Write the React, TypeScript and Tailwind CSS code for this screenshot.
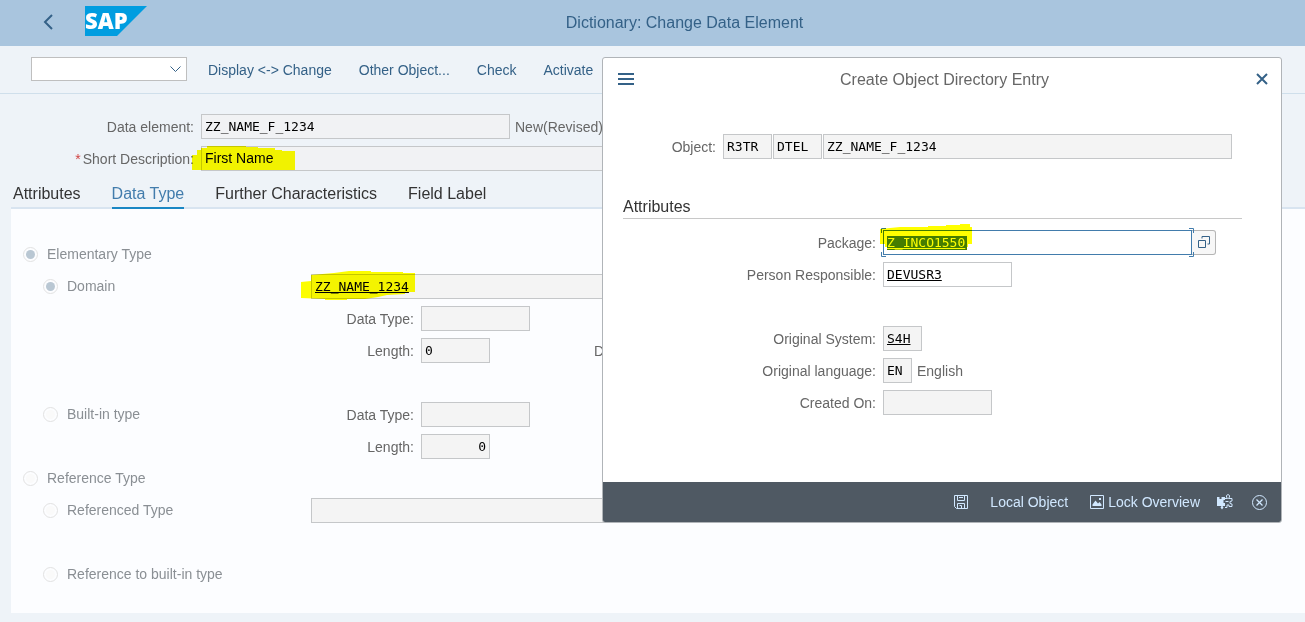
import React, { useId } from "react";

const mono = "font-['DejaVu_Sans_Mono',monospace] text-[13px]";
const sans = "font-['Liberation_Sans',Arial,sans-serif] text-sm";

type FieldProps = {
  label?: string;
  ariaLabel?: string;
  labelWidth?: string;
  required?: boolean;
  value?: string;
  className?: string;
  children?: React.ReactNode;
};

function Field({ label, ariaLabel, labelWidth = "", required, value = "", className = "", children }: FieldProps) {
  const id = useId();
  return (
    <div className="flex h-8 items-center">
      {label && (
        <label htmlFor={id} className={`${labelWidth} shrink-0 pt-[2px] pr-[7px] text-right whitespace-nowrap text-[#666]`}>
          {required && <span className="mr-[2px] text-[#d04343]">*</span>}
          {label}
        </label>
      )}
      <div className="relative flex">
        <input
          id={id}
          aria-label={ariaLabel}
          defaultValue={value}
          className={`h-[25px] border px-[3px] outline-none ${className}`}
        />
        {children}
      </div>
    </div>
  );
}

const plain = "border-[#c5c7c9] text-black";

function Note({ className = "pl-[5px]", children }: { className?: string; children: React.ReactNode }) {
  return <span className={`pt-[2px] leading-[23px] text-[#666] ${className}`}>{children}</span>;
}

function Radio({ label, name, checked = false, nested = false }: { label: string; name: string; checked?: boolean; nested?: boolean }) {
  return (
    <label className={`flex w-[300px] shrink-0 items-center gap-[9px] text-[#8a8f94] ${nested ? "pl-8" : "pl-3"}`}>
      <input
        type="radio"
        name={name}
        defaultChecked={checked}
        className="size-[15px] appearance-none rounded-full border border-[#e2e2e2] bg-[#fafafa] bg-clip-content p-[2px] checked:bg-[#b9c7d3]"
      />
      {label}
    </label>
  );
}

function Marker({ d, className }: { d: string; className: string }) {
  return (
    <svg aria-hidden="true" className={`pointer-events-none absolute mix-blend-multiply ${className}`} fill="#ffff00">
      <path d={d} />
    </svg>
  );
}

function SapLogo() {
  return (
    <svg className="overflow-visible" width="62" height="30" viewBox="0 0 62 30" role="img" aria-label="SAP">
      <path d="M0 0H62L32 30H0Z" fill="#009de0" />
      <text x="0" y="23" fontSize="22" fontWeight="800" fill="#fff" fontFamily="Open Sans, sans-serif">
        SAP
      </text>
    </svg>
  );
}

const tabs = ["Attributes", "Data Type", "Further Characteristics", "Field Label"];
const actions = ["Display <-> Change", "Other Object...", "Check", "Activate"];

function Dialog() {
  return (
    <section
      role="dialog"
      aria-label="Create Object Directory Entry"
      className="absolute top-[57px] right-[23px] w-[680px] overflow-hidden rounded-[3px] border border-[#b0b4b8] bg-white"
    >
      <header className="flex h-[42px] items-center justify-between pr-3 pl-[15px]">
        <button aria-label="Menu">
          <svg width="16" height="12" viewBox="0 0 16 12" fill="#346187">
            <path d="M0 0h16v2H0zM0 5h16v2H0zM0 10h16v2H0z" />
          </svg>
        </button>
        <h2 className="pt-[2px] text-base text-[#666]">Create Object Directory Entry</h2>
        <button aria-label="Close">
          <svg width="14" height="14" viewBox="0 0 14 14" stroke="#346187" strokeWidth="2">
            <path d="M2 2l10 10M12 2L2 12" />
          </svg>
        </button>
      </header>

      <div className="mt-[30px] flex gap-px">
        <Field label="Object:" labelWidth="w-[120px]" value="R3TR" className={`${mono} ${plain} w-[49px] bg-[#f4f4f4]`} />
        <Field ariaLabel="Object type" value="DTEL" className={`${mono} ${plain} w-[49px] bg-[#f4f4f4]`} />
        <Field ariaLabel="Object name" value="ZZ_NAME_F_1234" className={`${mono} ${plain} w-[409px] bg-[#f4f4f4]`} />
      </div>

      <h3 className="mt-8 mr-[39px] ml-5 h-[25px] border-b border-[#c8c8c8] text-base leading-[25px] text-[#333]">Attributes</h3>

      <div className="mt-[7px] mb-16">
        <Field
          label="Package:"
          labelWidth="w-[280px]"
          value="Z_INCO1550"
          className={`${mono} w-[309px] border-[#427cac] bg-[linear-gradient(#457d00,#457d00)] bg-[length:80px_14px] bg-[position:3px_5px] bg-no-repeat text-[#ffff00] underline`}
        >
          <svg className="pointer-events-none absolute -top-[2px] -left-[2px]" width="314" height="29" fill="none" stroke="#427cac">
            <path d="M5 .5H.5V5M308 .5h4.500V5M.5 24v4.500H5M312.500 24v4.500H308" />
          </svg>
          <button aria-label="Value help" className="flex h-[25px] w-6 items-center justify-center rounded-r-[3px] border border-l-0 border-[#b5b5b5] bg-[#f7f7f7]">
            <svg width="12" height="12" viewBox="0 0 12 12" fill="none" stroke="#346187">
              <path d="M.5 4.500h7v7h-7zM4 .5h7.500V8H9.500M4 .5V2.500" />
            </svg>
          </button>
          <Marker
            className="-top-[6px] -left-[3px] h-[26px] w-[93px]"
            d="M0 5L20 3H48V2H66V1H80V0H90V3H92V20H88V23H5V20H0Z"
          />
        </Field>
        <Field label="Person Responsible:" labelWidth="w-[280px]" value="DEVUSR3" className={`${mono} ${plain} w-[129px] bg-white underline`} />
        <div className="mt-8">
          <Field label="Original System:" labelWidth="w-[280px]" value="S4H" className={`${mono} ${plain} w-[39px] bg-[#f4f4f4] underline`} />
        </div>
        <Field label="Original language:" labelWidth="w-[280px]" value="EN" className={`${mono} ${plain} w-[29px] bg-[#f4f4f4]`}>
          <Note>English</Note>
        </Field>
        <Field label="Created On:" labelWidth="w-[280px]" className={`${mono} ${plain} w-[109px] bg-[#f4f4f4]`} />
      </div>

      <footer className="flex h-10 items-center justify-end bg-[#4f5963] pr-[14px] text-[#d1e8ff]">
        <button aria-label="Save" className="mr-[22px]">
          <svg width="14" height="14" viewBox="0 0 14 14" fill="none" stroke="currentColor">
            <path d="M.5.5h13v13h-11l-2-2zM3.500.5v5h7v-5M5 2.500h4M3.500 13.500v-5h7v5M5.500 10.500h2v3" />
          </svg>
        </button>
        <button className="mr-[22px]">Local Object</button>
        <button className="mr-[17px] flex items-center gap-1">
          <svg width="14" height="14" viewBox="0 0 14 14" fill="none" stroke="currentColor">
            <path d="M.5.5h13v13H.5z" />
            <path d="M2.500 11V9.500l3-4 2.500 3 1.500-1.500 2 2.500V11z" fill="currentColor" stroke="none" />
            <path d="M9 3h2v2H9z" fill="currentColor" stroke="none" />
          </svg>
          Lock Overview
        </button>
        <button aria-label="Extensions" className="mr-[19px]">
          <svg width="16" height="16" viewBox="0 0 16 16" fill="none" stroke="currentColor">
            <path d="M0 3h2.500v2h2V3H8v3H6.500v3H8v3H5.500l1 1.500-1.500 2-1.500-2 1-1.500H0z" fill="currentColor" stroke="none" />
            <path d="M8 4.500h2.500L9.500 3V1.500L11 .5l1.500 1V3l-1 1.500h3.500V7L13 7.500v2l2 .5v2.500h-3V11H10v2.500H8M8.500 7.500h3" />
          </svg>
        </button>
        <button aria-label="Cancel">
          <svg width="15" height="15" viewBox="0 0 15 15" fill="none" stroke="currentColor">
            <circle cx="7.500" cy="7.500" r="7" />
            <path d="M4.500 4.500l6 6M10.500 4.500l-6 6" strokeWidth="1.300" />
          </svg>
        </button>
      </footer>
    </section>
  );
}

export default function App() {
  return (
    <div className={`relative min-h-screen overflow-hidden bg-[#eef3f8] ${sans}`}>
      <header className="grid h-[46px] grid-cols-[1fr_auto_1fr] items-center bg-[#a9c5de]">
        <div className="flex h-[46px] items-start pt-[6px]">
          <button aria-label="Back" className="mt-2 ml-[43px] w-[42px]">
            <svg width="11" height="16" viewBox="0 0 11 16" fill="none" stroke="#346187" strokeWidth="2">
              <path d="M9 1L2 8l7 7" />
            </svg>
          </button>
          <SapLogo />
        </div>
        <h1 className="pl-16 text-base text-[#346187]">Dictionary: Change Data Element</h1>
      </header>

      <nav className="flex h-12 items-center gap-[27px] border-b border-[#cfdfeb] pl-[31px] text-[#346187]">
        <div className="relative -mr-[6px] -mt-[2px] flex">
          <select aria-label="Command" className="h-6 w-[156px] appearance-none border border-[#bfbfbf] bg-white px-1">
            <option></option>
          </select>
          <svg className="pointer-events-none absolute top-[9px] right-[6px]" width="11" height="7" viewBox="0 0 11 7" fill="none" stroke="#346187">
            <path d="M.5.5l5 5 5-5" />
          </svg>
        </div>
        {actions.map((a) => (
          <button key={a} className="whitespace-nowrap">{a}</button>
        ))}
      </nav>

      <div className="mt-4">
        <Field label="Data element:" labelWidth="w-[201px]" value="ZZ_NAME_F_1234" className={`${mono} ${plain} w-[309px] bg-[#f1f2f4]`}>
          <Note>New(Revised)</Note>
        </Field>
        <Field label="Short Description:" labelWidth="w-[201px]" required value="First Name" className={`${sans} ${plain} w-[620px] bg-[#f1f2f4]`}>
          <Marker
            className="-top-[1px] -left-[9px] h-[26px] w-[103px]"
            d="M0 10H5V5H9V3H15V1H54V2H66V3H83V5H90V6H103V25H0Z"
          />
        </Field>
      </div>

      <div role="tablist" className="ml-[11px] flex h-[35px] items-end gap-[31px] border-b-2 border-[#d8e4f0] pl-[2px] text-base text-[#333]">
        {tabs.map((t, i) => (
          <button
            key={t}
            role="tab"
            aria-selected={i === 1}
            className={`-mb-[2px] h-8 border-b-2 pt-1 whitespace-nowrap ${
              i === 1 ? "border-[#1a87c4] text-[#427cac]" : "border-transparent"
            }`}
          >
            {t}
          </button>
        ))}
      </div>

      <main className="mb-[9px] ml-[11px] bg-[#fcfdff] pt-[29px] pb-[23px]">
        <div className="flex h-8">
          <Radio name="category" label="Elementary Type" checked />
        </div>
        <div className="flex h-8">
          <Radio name="kind" label="Domain" nested checked />
          <Field ariaLabel="Domain name" value="ZZ_NAME_1234" className={`${mono} ${plain} w-[620px] bg-[#f4f4f4] underline`}>
            <Marker
              className="-top-[3px] -left-[10px] h-[30px] w-[115px]"
              d="M0 11L10 10V4L33 2L48 0H70V1H102V2H114V21H104V23L86 24L77 26L64 28H46V29H24V28L0 27Z"
            />
          </Field>
        </div>
        <Field label="Data Type:" labelWidth="w-[410px]" className={`${mono} ${plain} w-[109px] bg-[#f4f4f4]`} />
        <Field label="Length:" labelWidth="w-[410px]" value="0" className={`${mono} ${plain} w-[69px] bg-[#f4f4f4]`}>
          <Note className="pl-[104px]">Decimals:</Note>
        </Field>
        <div className="mt-8 flex h-8">
          <Radio name="kind" label="Built-in type" nested />
          <Field label="Data Type:" labelWidth="w-[110px]" className={`${mono} ${plain} w-[109px] bg-[#f4f4f4]`} />
        </div>
        <Field label="Length:" labelWidth="w-[410px]" value="0" className={`${mono} ${plain} w-[69px] bg-[#f4f4f4] text-right`} />
        <div className="flex h-8">
          <Radio name="category" label="Reference Type" />
        </div>
        <div className="flex h-8">
          <Radio name="ref" label="Referenced Type" nested />
          <Field ariaLabel="Referenced type name" className={`${mono} ${plain} w-[620px] bg-[#f4f4f4]`} />
        </div>
        <div className="mt-8 flex h-8">
          <Radio name="ref" label="Reference to built-in type" nested />
        </div>
      </main>

      <Dialog />
    </div>
  );
}
